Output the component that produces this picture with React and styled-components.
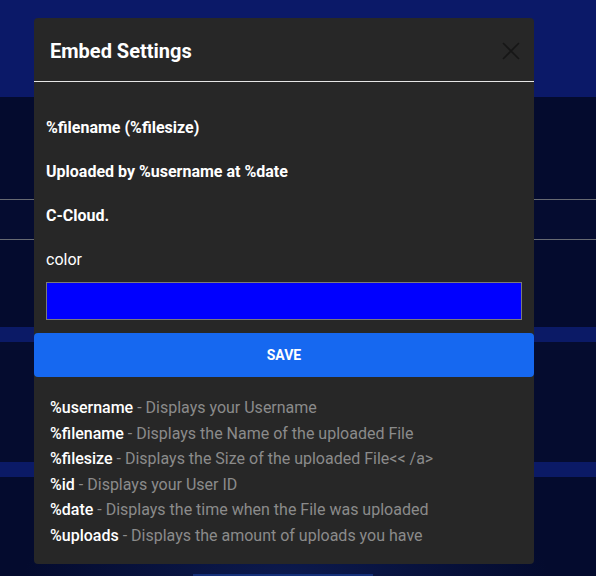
import React from "react"
import styled, { createGlobalStyle } from "styled-components"

const GlobalStyle = createGlobalStyle`
  html, body {
    margin: 0;
    padding: 0;
    background: #040b2e;
    font-family: Roboto, "Liberation Sans", sans-serif;
  }
`

const Page = styled.div`
  position: relative;
  width: 596px;
  height: 576px;
  overflow: hidden;
  background: #040b2e;
  display: flex;
  flex-direction: column;
`

const Band = styled.div`
  height: ${props => props.h}px;
  flex-shrink: 0;
  background: ${props => props.bg || "#040b2e"};
  border-top: ${props => (props.line ? "1px solid #676a72" : "none")};
`

const BottomArea = styled.div`
  flex: 1;
  display: flex;
  justify-content: center;
  align-items: flex-end;
  background: radial-gradient(ellipse at 48% 100%, #0c1a4e 0%, #040b2e 60%);
`

const GhostButton = styled.div`
  width: 180px;
  height: 2px;
  margin-right: 30px;
  background: #14307a;
`

const Modal = styled.div`
  position: absolute;
  top: 18px;
  left: 34px;
  width: 500px;
  background: #272727;
  border-radius: 4px;
  display: flex;
  flex-direction: column;
  color: #fff;
`

const ModalHeader = styled.div`
  height: 63px;
  display: flex;
  align-items: center;
  justify-content: space-between;
  padding: 0 16px;
  border-bottom: 1px solid #e6e6e6;
`

const Title = styled.h2`
  margin: 2px 0 0;
  font-size: 20px;
  font-weight: 700;
`

const CloseButton = styled.button`
  border: none;
  background: none;
  padding: 0;
  width: 18px;
  height: 18px;
  margin: 2px -2px 0 0;
  cursor: pointer;
  display: flex;
`

const ModalBody = styled.div`
  padding: 36px 12px 13px;
  display: flex;
  flex-direction: column;
`

const Field = styled.div`
  font-size: 16px;
  line-height: 20px;
  font-weight: ${props => (props.bold ? 700 : 400)};
  margin-bottom: ${props => (props.last ? 12 : 24)}px;
`

const ColorBox = styled.div`
  height: 36px;
  border: 1px solid #7a7a7a;
  background: ${props => props.color};
`

const SaveButton = styled.button`
  height: 44px;
  border: none;
  border-radius: 4px;
  background: #1668f0;
  color: #fff;
  font-family: Roboto, "Liberation Sans", sans-serif;
  font-size: 14px;
  font-weight: 700;
  cursor: pointer;
`

const Legend = styled.div`
  padding: 18px 16px 15px;
  display: flex;
  flex-direction: column;
`

const LegendRow = styled.div`
  font-size: 16px;
  line-height: 25.6px;
  color: #8b8b8b;
`

const Key = styled.span`
  color: #fff;
  font-weight: 500;
`

const legend = [
  ["%username", "Displays your Username"],
  ["%filename", "Displays the Name of the uploaded File"],
  ["%filesize", "Displays the Size of the uploaded File<< /a>"],
  ["%id", "Displays your User ID"],
  ["%date", "Displays the time when the File was uploaded"],
  ["%uploads", "Displays the amount of uploads you have"],
]

export default function App() {
  return (
    <Page>
      <GlobalStyle />
      <Band h={97} bg="#0b1968" />
      <Band h={102} />
      <Band h={39} line bg="#050c30" />
      <Band h={87} line />
      <Band h={15} bg="#0b1a66" />
      <Band h={120} bg="#050c2f" />
      <Band h={15} bg="#0b1a66" />
      <BottomArea>
        <GhostButton />
      </BottomArea>

      <Modal>
        <ModalHeader>
          <Title>Embed Settings</Title>
          <CloseButton aria-label="close">
            <svg width="18" height="18" viewBox="0 0 18 18">
              <path
                d="M1 1 L17 17 M17 1 L1 17"
                stroke="#161616"
                strokeWidth="1.6"
                fill="none"
              />
            </svg>
          </CloseButton>
        </ModalHeader>
        <ModalBody>
          <Field bold>%filename (%filesize)</Field>
          <Field bold>Uploaded by %username at %date</Field>
          <Field bold>C-Cloud.</Field>
          <Field last>color</Field>
          <ColorBox color="#0000ff" />
        </ModalBody>
        <SaveButton type="button">SAVE</SaveButton>
        <Legend>
          {legend.map(([key, text]) => (
            <LegendRow key={key}>
              <Key>{key}</Key> - {text}
            </LegendRow>
          ))}
        </Legend>
      </Modal>
    </Page>
  )
}
